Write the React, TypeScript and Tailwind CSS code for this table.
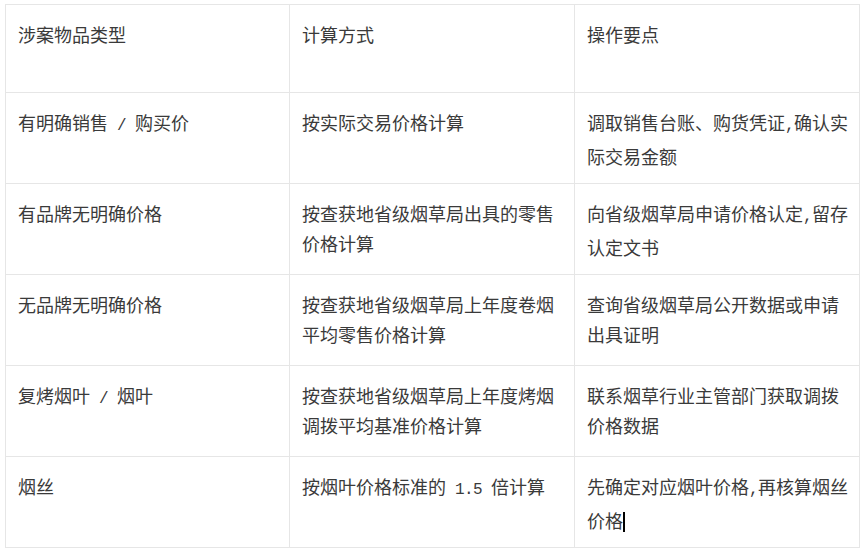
import React from 'react';

// half-width pieces (spaces, slash, digits, commas) sit in a 9px monospace cell like the source font
const M: React.FC<{ children: React.ReactNode }> = ({ children }) => (
  <span className="font-['Liberation_Mono',monospace] text-[16px] tracking-[-0.6px]">{children}</span>
);

const Cursor = () => <span className="inline-block w-[2px] h-[20px] bg-black align-[-4px]" />;

interface Row {
  type: React.ReactNode;
  method: React.ReactNode;
  note: React.ReactNode;
}

const rows: Row[] = [
  {
    type: <>有明确销售<M> / </M>购买价</>,
    method: '按实际交易价格计算',
    note: <>调取销售台账、购货凭证<M>,</M>确认实际交易金额</>,
  },
  {
    type: '有品牌无明确价格',
    method: '按查获地省级烟草局出具的零售价格计算',
    note: <>向省级烟草局申请价格认定<M>,</M>留存认定文书</>,
  },
  {
    type: '无品牌无明确价格',
    method: '按查获地省级烟草局上年度卷烟平均零售价格计算',
    note: '查询省级烟草局公开数据或申请出具证明',
  },
  {
    type: <>复烤烟叶<M> / </M>烟叶</>,
    method: '按查获地省级烟草局上年度烤烟调拨平均基准价格计算',
    note: '联系烟草行业主管部门获取调拨价格数据',
  },
  {
    type: '烟丝',
    method: <>按烟叶价格标准的<M> 1.5 </M>倍计算</>,
    note: <>先确定对应烟叶价格<M>,</M>再核算烟丝价格<Cursor /></>,
  },
];

const cell = 'border border-[#e6e6e6] align-top pl-[12px] pr-[8px] pt-[14px] pb-0';

export default function App() {
  return (
    <div className="w-[867px] h-[551px] bg-white pl-[5px] pt-[4px] overflow-hidden font-['Noto_Sans_CJK_SC',sans-serif] text-[18px] leading-[30px] text-[#3a3a3a]">
      <table className="border-collapse table-fixed w-[855px]">
        <colgroup>
          <col className="w-[284px]" />
          <col className="w-[285px]" />
          <col className="w-[285px]" />
        </colgroup>
        <tbody>
          <tr className="h-[88px]">
            <td className={cell}>涉案物品类型</td>
            <td className={cell}>计算方式</td>
            <td className={cell}>操作要点</td>
          </tr>
          {rows.map((r, i) => (
            <tr key={i} className="h-[91px]">
              <td className={cell}>{r.type}</td>
              <td className={cell}>{r.method}</td>
              <td className={cell}>{r.note}</td>
            </tr>
          ))}
        </tbody>
      </table>
    </div>
  );
}
